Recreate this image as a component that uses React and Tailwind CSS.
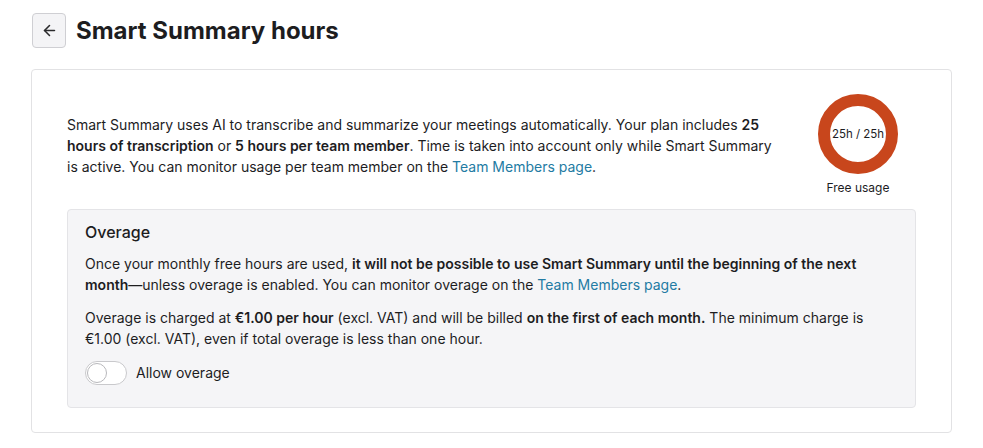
import { useState } from 'react';

function Toggle({ checked, onChange }) {
  return (
    <button
      type="button"
      onClick={() => onChange(!checked)}
      className={`relative h-6 w-[42px] rounded-full border ${checked ? 'border-[#237ba3] bg-[#237ba3]' : 'border-[#c9c9cc] bg-white'}`}
    >
      <span
        className={`absolute top-[1px] h-5 w-5 rounded-full border border-[#b8b8bc] bg-white ${checked ? 'left-[19px]' : 'left-[1px]'}`}
      />
    </button>
  );
}

function UsageRing() {
  return (
    <div className="flex w-[116px] shrink-0 flex-col items-center">
      <div className="relative h-20 w-20">
        <svg width="80" height="80" viewBox="0 0 80 80">
          <circle cx="40" cy="40" r="34" fill="none" stroke="#c8461c" strokeWidth="12" />
        </svg>
        <div className="absolute inset-0 flex items-center justify-center text-[11.5px] text-[#1d1d1f]">
          25h / 25h
        </div>
      </div>
      <div className="mt-1.5 text-xs leading-4 text-[#1d1d1f]">Free usage</div>
    </div>
  );
}

export default function App() {
  const [allowOverage, setAllowOverage] = useState(false);

  return (
    <div className="min-h-screen bg-white px-[31px] pt-[13px] font-['Inter',sans-serif] text-sm text-[#1d1d1f]">
      <div className="flex items-center gap-2.5 pl-px">
        <button
          type="button"
          className="flex h-[35px] w-[34px] items-center justify-center rounded border border-[#cfcfd3] bg-[#f4f4f6] text-[#2a2a2c]"
        >
          <svg width="17" height="17" viewBox="0 0 24 24" fill="none" stroke="currentColor" strokeWidth="2.2" strokeLinecap="round" strokeLinejoin="round">
            <path d="M19 12H5" />
            <path d="M12 19l-7-7 7-7" />
          </svg>
        </button>
        <h1 className="text-2xl font-bold text-[#1d1d1f]">Smart Summary hours</h1>
      </div>

      <div className="mt-[21px] rounded border border-[#e2e2e4] px-[35px] pb-6 pt-6">
        <div className="flex items-center justify-between">
          <p className="max-w-[712px] leading-[21px]">
            Smart Summary uses AI to transcribe and summarize your meetings automatically. Your plan includes{' '}
            <b className="font-semibold">25 hours of transcription</b> or <b className="font-semibold">5 hours per team member</b>.
            Time is taken into account only while Smart Summary is active. You can monitor usage per team member on the{' '}
            <a href="#" className="text-[#237ba3]">Team Members page</a>.
          </p>
          <UsageRing />
        </div>

        <div className="mt-[13px] rounded border border-[#e4e4e7] bg-[#f5f5f7] px-[17px] pb-[22px] pt-2.5">
          <h2 className="text-base font-medium leading-6">Overage</h2>
          <p className="mt-[9px] leading-[21px]">
            Once your monthly free hours are used,{' '}
            <b className="font-semibold">it will not be possible to use Smart Summary until the beginning of the next month</b>
            —unless overage is enabled. You can monitor overage on the{' '}
            <a href="#" className="text-[#237ba3]">Team Members page</a>.
          </p>
          <p className="mt-3 leading-[21px]">
            Overage is charged at <b className="font-semibold">€1.00 per hour</b> (excl. VAT) and will be billed{' '}
            <b className="font-semibold">on the first of each month.</b> The minimum charge is €1.00 (excl. VAT), even if
            total overage is less than one hour.
          </p>
          <label className="mt-3 flex items-center gap-[9px]">
            <Toggle checked={allowOverage} onChange={setAllowOverage} />
            <span>Allow overage</span>
          </label>
        </div>
      </div>
    </div>
  );
}
